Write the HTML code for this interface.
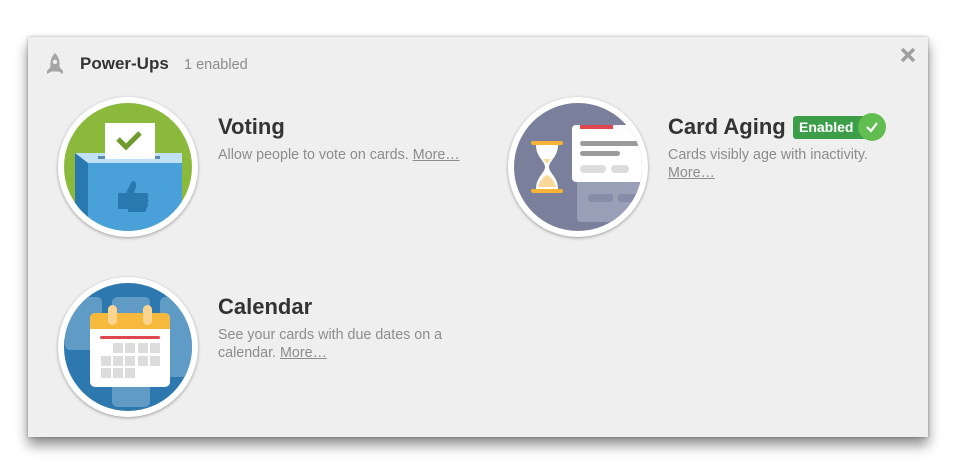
<!DOCTYPE html>
<html><head><meta charset="utf-8"><style>
body{margin:0;width:956px;height:474px;background:#fff;font-family:"Liberation Sans",sans-serif;position:relative;overflow:hidden}
.panel{position:absolute;left:28px;top:37px;width:900px;height:400px;background:#efefef;box-shadow:0 8px 12px rgba(0,0,0,.45),0 0 3px rgba(0,0,0,.3)}
.abs{position:absolute}
.ic{position:absolute;width:140px;height:140px;border-radius:50%;background:#fff;box-shadow:0 1px 3px rgba(0,0,0,.35)}
h2{position:absolute;margin:0;font-size:22px;font-weight:bold;color:#333;white-space:nowrap}
.d{position:absolute;font-size:14.3px;color:#8c8c8c;line-height:18px;white-space:nowrap}
.d u{color:#8c8c8c}
</style></head><body>
<div class="panel"></div>
<svg class="abs" style="left:44px;top:52px" width="22" height="24" viewBox="0 0 22 24"><path d="M11 1C7 5 6 10 6.5 15L3 19L3 22L7.5 19.5L14.5 19.5L19 22L19 19L15.5 15C16 10 15 5 11 1Z" fill="#a5a5a5"/><circle cx="11" cy="10" r="2.2" fill="#efefef"/></svg>
<div class="abs" style="left:80px;top:54px;font-size:17px;font-weight:bold;color:#333">Power-Ups</div>
<div class="abs" style="left:184px;top:57px;font-size:14.5px;color:#8c8c8c">1 enabled</div>
<svg class="abs" style="left:900px;top:47px" width="16" height="16" viewBox="0 0 16 16"><path d="M2 2L14 14M14 2L2 14" stroke="#a0a0a0" stroke-width="3.5"/></svg>

<div class="ic" style="left:58px;top:97px"><svg width="140" height="140"><defs><clipPath id="c1"><circle cx="70" cy="70" r="64"/></clipPath></defs><g clip-path="url(#c1)"><rect width="140" height="140" fill="#8ab93c"/>
<rect x="47" y="26" width="50" height="40" fill="#fff"/><path d="M60 42L68 50L82 36" stroke="#6e9a2e" stroke-width="5" fill="none"/>
<rect x="17" y="56" width="107" height="10" fill="#bfe0f5"/><rect x="40" y="59" width="62" height="3" fill="#5a8aad"/><rect x="47" y="56" width="50" height="6" fill="#fff"/>
<rect x="30" y="66" width="94" height="80" fill="#4aa0d8"/><path d="M17 56L30 66L30 140L17 140Z" fill="#2a78b0"/>
<path d="M60 96h8l6-12c3 0 5 2 4 6l-2 6h12c3 0 3 4 1 5c2 1 2 4 0 5c2 1 1 4-1 5c1 2 0 4-3 4H70v-3h-10z" fill="#2a78b0"/></g></svg></div>
<h2 style="left:218px;top:114px">Voting</h2>
<div class="d" style="left:218px;top:146px">Allow people to vote on cards. <u>More…</u></div>

<div class="ic" style="left:508px;top:97px"><svg width="140" height="140"><defs><clipPath id="c2"><circle cx="70" cy="70" r="64"/></clipPath></defs><g clip-path="url(#c2)"><rect width="140" height="140" fill="#7a7f9c"/>
<rect x="69" y="80" width="80" height="45" rx="4" fill="#9a9fb8"/><rect x="80" y="97" width="25" height="8" rx="3" fill="#878ca8"/><rect x="110" y="97" width="20" height="8" rx="3" fill="#878ca8"/>
<rect x="64" y="28" width="90" height="57" rx="4" fill="#fff"/><rect x="72" y="28" width="33" height="4" fill="#e0464e"/>
<rect x="72" y="44" width="70" height="5" rx="2.5" fill="#9b9b9b"/><rect x="72" y="54" width="40" height="5" rx="2.5" fill="#9b9b9b"/>
<rect x="72" y="68" width="26" height="8" rx="4" fill="#dcdcdc"/><rect x="103" y="68" width="18" height="8" rx="4" fill="#dcdcdc"/>
<rect x="23" y="44" width="32" height="4" rx="2" fill="#f6b335"/><rect x="23" y="92" width="32" height="4" rx="2" fill="#f6b335"/>
<path d="M28 48h22c0 12-9 16-9 22s9 10 9 22H28c0-12 9-16 9-22s-9-10-9-22z" fill="#fff"/><path d="M35 62h8l-4 5zM30 90c2-8 8-12 9-12s7 4 9 12z" fill="#f9d89a"/></g></svg></div>
<h2 style="left:668px;top:114px">Card Aging</h2>
<div class="abs" style="left:793px;top:116px;width:80px;height:23px;background:#3d9e4a;border-radius:3px;color:#fff;font-size:14px;font-weight:bold;line-height:23px;padding-left:6px;box-sizing:border-box">Enabled</div>
<div class="abs" style="left:858px;top:113px;width:28px;height:28px;border-radius:50%;background:#61bd4f"></div>
<svg class="abs" style="left:864px;top:119px" width="16" height="16"><path d="M3 8L7 12L13 4" stroke="#fff" stroke-width="2.2" fill="none"/></svg>
<div class="d" style="left:668px;top:146px">Cards visibly age with inactivity.<br><u>More…</u></div>

<div class="ic" style="left:58px;top:277px"><svg width="140" height="140"><defs><clipPath id="c3"><circle cx="70" cy="70" r="64"/></clipPath></defs><g clip-path="url(#c3)"><rect width="140" height="140" fill="#2e78b0"/>
<rect x="7" y="20" width="37" height="53" rx="5" fill="#5f9bc4"/><rect x="54" y="20" width="38" height="110" rx="5" fill="#5f9bc4"/><rect x="102" y="20" width="40" height="80" rx="5" fill="#5f9bc4"/>
<rect x="32" y="36" width="80" height="74" rx="5" fill="#fff"/><path d="M32 52V41a5 5 0 0 1 5-5h70a5 5 0 0 1 5 5v11z" fill="#f6b93b"/>
<rect x="50" y="28" width="9" height="20" rx="4.5" fill="#fad58f"/><rect x="85" y="28" width="9" height="20" rx="4.5" fill="#fad58f"/>
<rect x="42" y="59" width="60" height="3" rx="1.5" fill="#e0464e"/>
<g fill="#dcdcdc"><rect x="55" y="66" width="10" height="10"/><rect x="67" y="66" width="10" height="10"/><rect x="80" y="66" width="10" height="10"/><rect x="92" y="66" width="10" height="10"/>
<rect x="43" y="79" width="10" height="10"/><rect x="55" y="79" width="10" height="10"/><rect x="67" y="79" width="10" height="10"/><rect x="80" y="79" width="10" height="10"/><rect x="92" y="79" width="10" height="10"/>
<rect x="43" y="91" width="10" height="10"/><rect x="55" y="91" width="10" height="10"/><rect x="67" y="91" width="10" height="10"/></g></g></svg></div>
<h2 style="left:218px;top:294px">Calendar</h2>
<div class="d" style="left:218px;top:326px">See your cards with due dates on a<br>calendar. <u>More…</u></div>
</body></html>
